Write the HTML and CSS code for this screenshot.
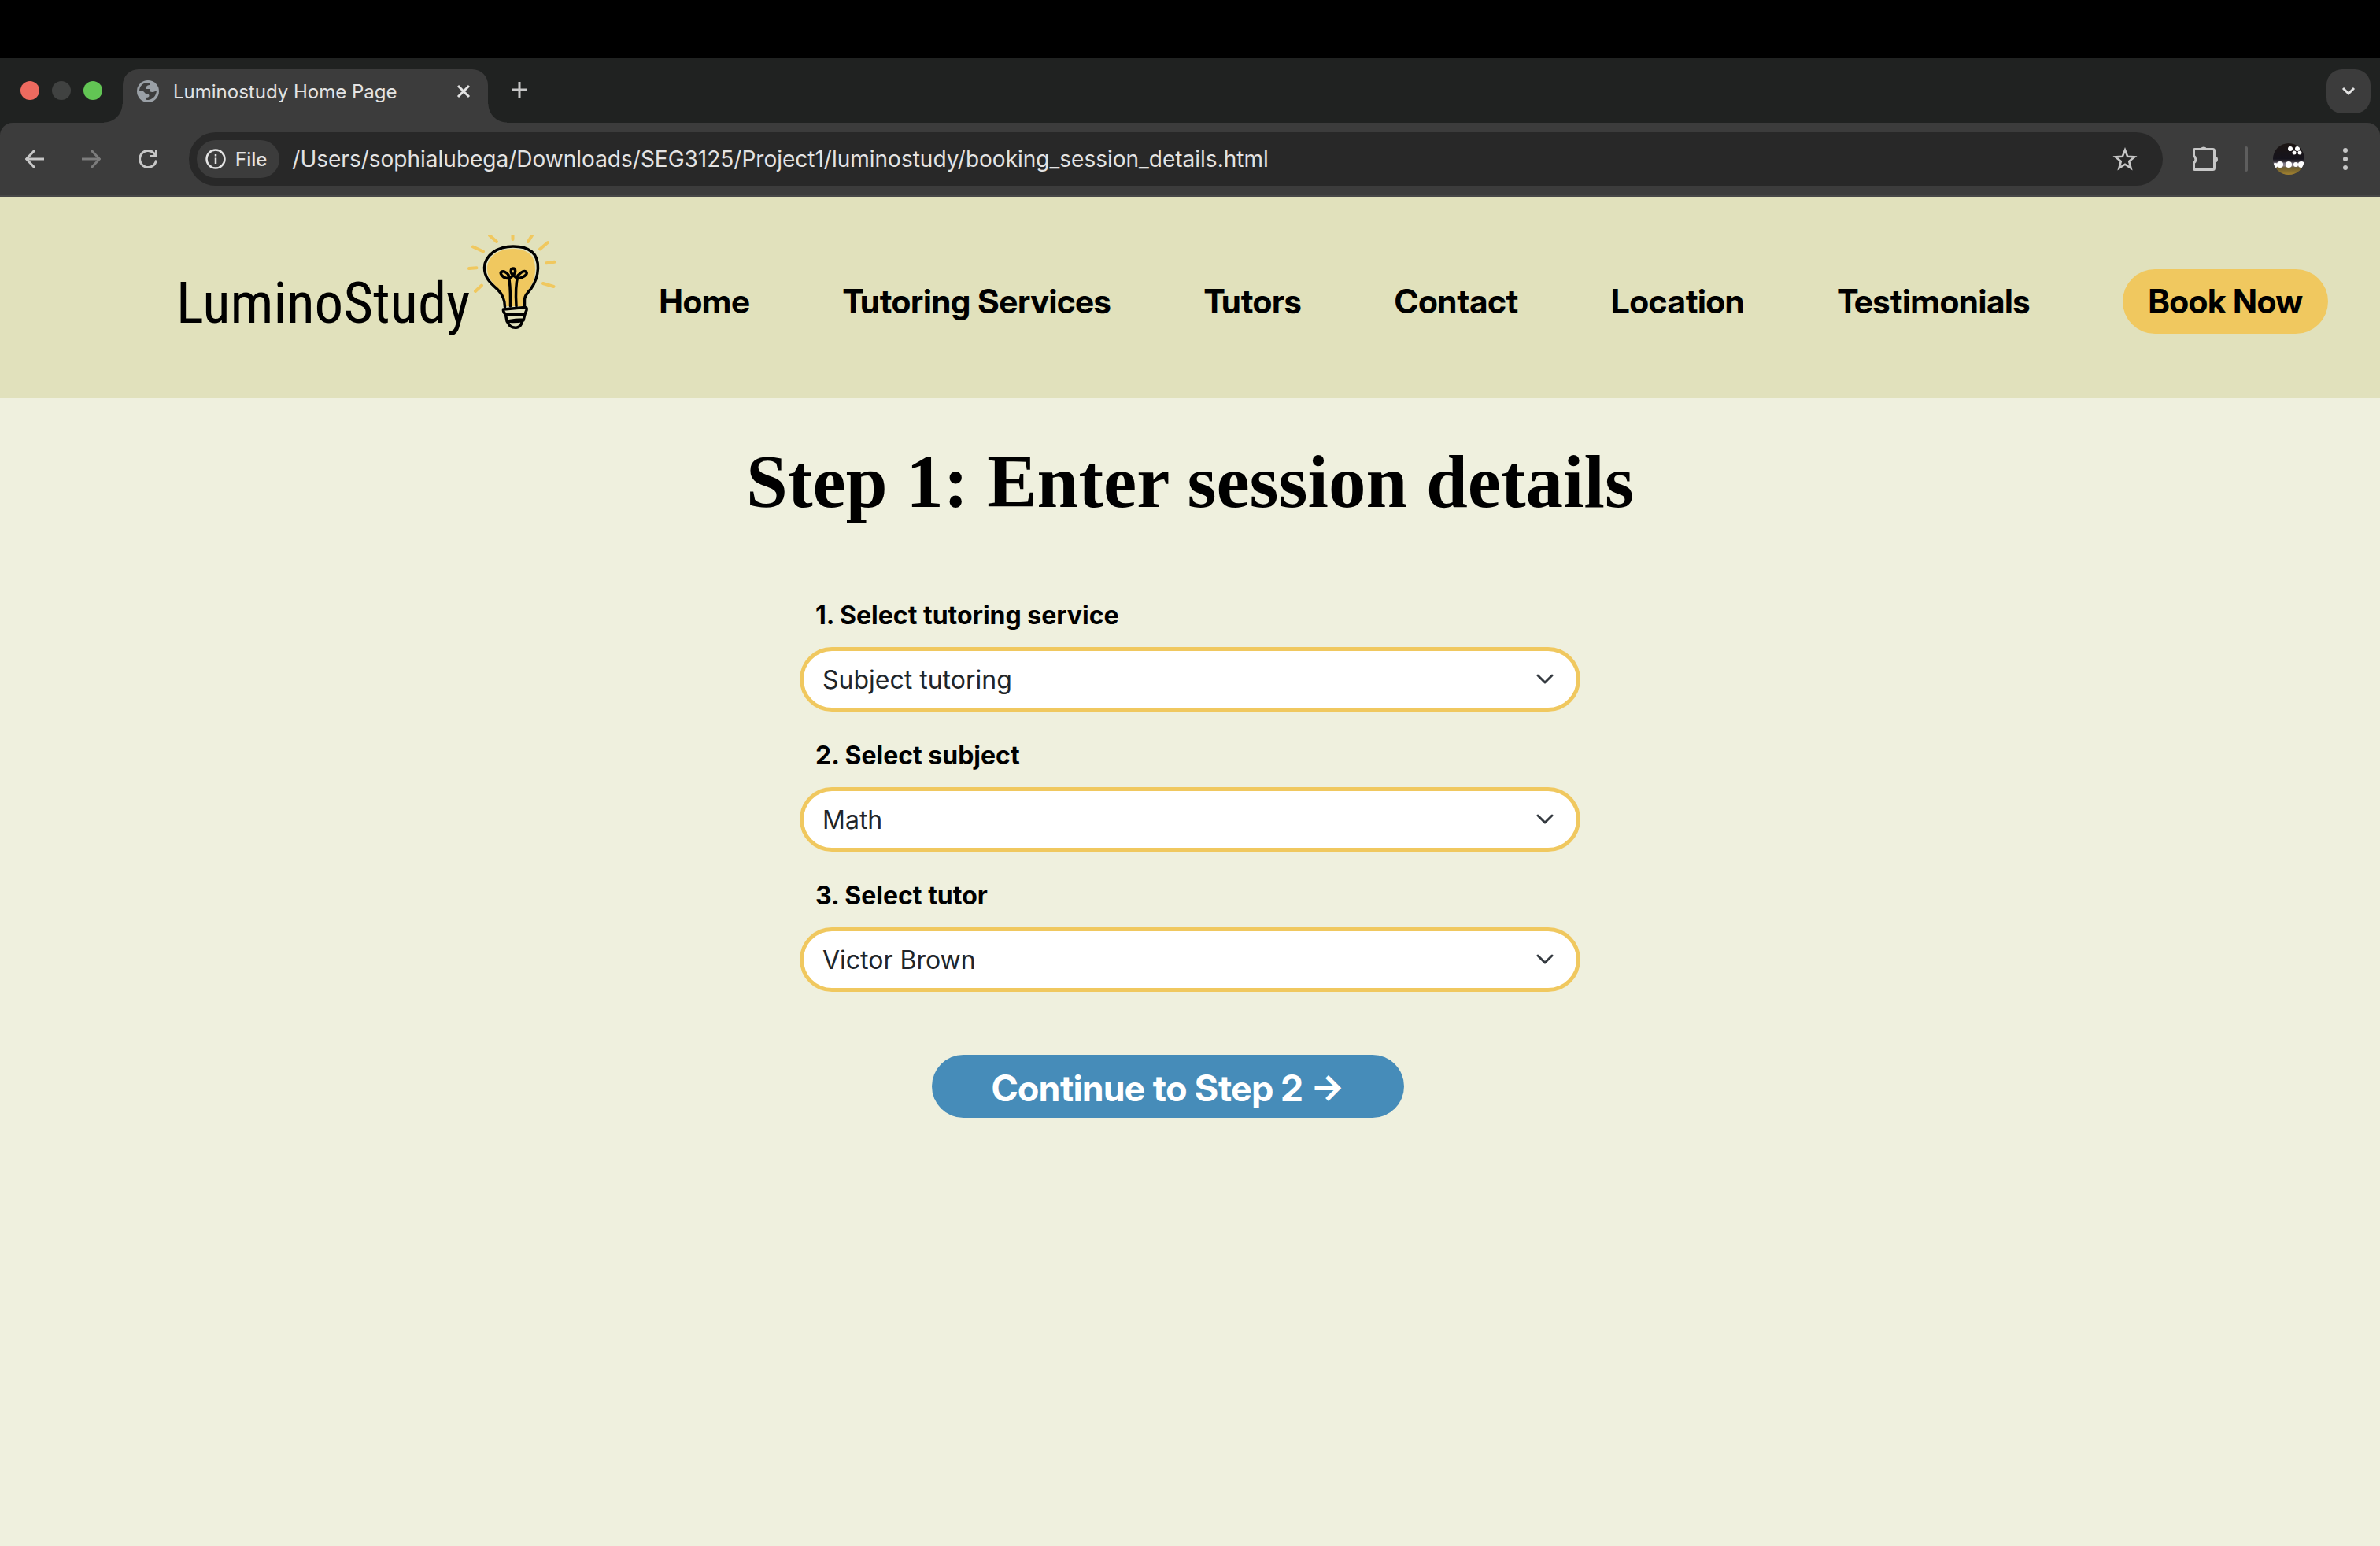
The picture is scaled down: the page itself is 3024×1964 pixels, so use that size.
FILE: index.html
```
<!DOCTYPE html>
<html lang="en">
<head>
<meta charset="utf-8">
<meta name="viewport" content="width=device-width, initial-scale=1">
<title>Luminostudy Home Page</title>
<link rel="stylesheet" href="styles.css">
</head>
<body>
<div class="screen-top"></div>
<div class="tabstrip">
  <div class="lights">
    <span class="light light-red"></span>
    <span class="light light-grey"></span>
    <span class="light light-green"></span>
  </div>
  <div class="tab">
    <svg class="globe" viewBox="0 0 28 28" aria-hidden="true">
      <circle cx="14" cy="14" r="14" fill="#9aa0a6"/>
      <path d="M3 14C3 8 7 3.500 13 3l3 .5V6c-2 0-4 1-4 2.500V11h4c0 3 1 4 3.500 4 2 0 3-1 5.500-2-.5 6-4 11-10.500 12-1.500 0-2 0-3-.5V22c3 0 4-1 4-2.500S14 17 12 17s-2-2-4-3z" fill="#3c3c3c"/>
    </svg>
    <span class="tab-title">Luminostudy Home Page</span>
    <button class="icon-btn tab-close" aria-label="Close tab"><svg width="18" height="18" viewBox="0 0 18 18"><path d="M2 2l14 14M16 2L2 16" stroke="#e3e3e3" stroke-width="3" fill="none"/></svg></button>
  </div>
  <button class="icon-btn new-tab" aria-label="New tab"><svg width="20" height="20" viewBox="0 0 20 20"><path d="M10 0v20M0 10h20" stroke="#c7c7c7" stroke-width="3"/></svg></button>
  <button class="tab-search" aria-label="Search tabs"><svg width="18" height="12" viewBox="0 0 18 12"><path d="M2 2l7 7 7-7" stroke="#e3e3e3" stroke-width="3" fill="none"/></svg></button>
</div>
<div class="toolbar-back">
  <div class="toolbar">
    <div class="nav-buttons">
      <button class="icon-btn" aria-label="Back"><svg width="24" height="24" viewBox="0 0 24 24"><path d="M24 12H2M12 1L1.500 12 12 23" stroke="#c7c7c7" stroke-width="3" fill="none"/></svg></button>
      <button class="icon-btn" aria-label="Forward"><svg width="24" height="24" viewBox="0 0 24 24"><path d="M0 12h22M12 1l10.500 11L12 23" stroke="#7c7c7c" stroke-width="3" fill="none"/></svg></button>
      <button class="icon-btn" aria-label="Reload"><svg width="24" height="24" viewBox="0 0 24 24"><path d="M22.500 13.500A10.500 10.500 0 1 1 19.500 4.500L22 8" stroke="#c7c7c7" stroke-width="3" fill="none"/><path d="M22.500 0v8.500H14" stroke="#c7c7c7" stroke-width="3" fill="none"/></svg></button>
    </div>
    <div class="omnibox">
      <button class="file-chip"><svg width="26" height="26" viewBox="0 0 26 26"><circle cx="13" cy="13" r="11.500" stroke="#e3e3e3" stroke-width="2.500" fill="none"/><path d="M13 11.500V19M13 7v2.500" stroke="#e3e3e3" stroke-width="2.500"/></svg>File</button>
      <input class="address" type="text" aria-label="Address" value="/Users/sophialubega/Downloads/SEG3125/Project1/luminostudy/booking_session_details.html">
      <button class="icon-btn" aria-label="Bookmark"><svg width="32" height="32" viewBox="0 0 32 32"><path d="M16 4.500l3.200 8.300 8.900.5-6.900 5.600 2.300 8.700-7.500-4.900-7.500 4.900 2.300-8.700-6.900-5.600 8.900-.5z" stroke="#c7c7c7" stroke-width="2.600" fill="none"/></svg></button>
    </div>
    <div class="tools">
      <button class="icon-btn" aria-label="Extensions"><svg width="36" height="36" viewBox="0 0 36 36"><path d="M4.500 5.500h23q2 0 2 2v22q0 2-2 2h-23q-1 0-1-2v-6.500a5.500 5.500 0 0 0 0-9V7.500q0-2 1-2z" stroke="#c7c7c7" stroke-width="3" fill="none"/><path d="M12 5a4.500 4.500 0 0 1 8 0zM30 14.500a4 4 0 0 1 0 8z" fill="#c7c7c7"/></svg></button>
      <span class="divider"></span>
      <button class="icon-btn" aria-label="Profile"><svg width="40" height="40" viewBox="0 0 40 40">
        <defs><clipPath id="face"><circle cx="20" cy="20" r="20"/></clipPath>
        <linearGradient id="stage" x1="0" y1="0" x2="0" y2="1"><stop offset="0" stop-color="#1c1512"/><stop offset=".5" stop-color="#15131c"/><stop offset=".68" stop-color="#6d6468"/><stop offset=".8" stop-color="#71602e"/><stop offset="1" stop-color="#a3822f"/></linearGradient></defs>
        <g clip-path="url(#face)"><rect width="40" height="40" fill="url(#stage)"/>
        <path d="M0 27h40" stroke="#b9b5cf" stroke-width="5" opacity=".4"/>
        <g fill="#fff"><circle cx="22" cy="7" r="3"/><circle cx="31" cy="7" r="3"/><circle cx="27" cy="12" r="2.500"/><circle cx="34" cy="12" r="2.500"/><circle cx="3" cy="28" r="3"/><circle cx="9" cy="27" r="4"/><circle cx="20" cy="27" r="4"/><circle cx="29" cy="27" r="3"/><circle cx="36" cy="27" r="4"/></g></g></svg></button>
      <button class="icon-btn" aria-label="Menu"><svg width="8" height="32" viewBox="0 0 8 32"><g fill="#c7c7c7"><circle cx="4" cy="5" r="3"/><circle cx="4" cy="16" r="3"/><circle cx="4" cy="27" r="3"/></g></svg></button>
    </div>
  </div>
</div>
<header class="site-header">
  <a class="logo" href="#">
    <span class="logo-text">LuminoStudy</span>
    <svg class="bulb" width="112" height="122" viewBox="0 0 112 122" aria-hidden="true">
      <g stroke="#f0c85f" stroke-width="4" stroke-linecap="round" fill="none">
        <path d="M28 0l9 8M57.500 0v5M82 0l-5 8M102 9l-10 8.500M100 35.300l10.500-1.600M96 61l13.500 4M7 14.500l13 6M2 42l9.500-.7M18 63.500l-8 7.500"/>
      </g>
      <path d="M57 17C39 17 25 28 25 42c0 13 8 18 14 26 7 8 10 13 10 22h21c-1-9 3-15 8-22 5-7 8-15 8-25 0-18-10-26-29-26z" fill="#f0c85f"/>
      <g stroke="#000" stroke-width="3.500" stroke-linecap="round" stroke-linejoin="round" fill="none">
        <path d="M47.500 91c0-10-3-16-9-22S21.500 56 21.500 41C22 25 38 14 58 14c21 0 32 9 31.500 28-.5 12-4 19-9 26-5 6-8 9-8 14v8"/>
        <path d="M54.500 90c0-15 .5-27-2.500-39M62 90c-1-15-1-27 2-39"/>
        <path d="M58 50c-4-2-3.500-8 0-8s3.500 6 0 8c-2 4-8 6-12 3s-5-6-2-7 8 3 8 5M58 50c3 4 7 6 12 3 4-2 7-5 4-7s-9 3-10 6"/>
        <path d="M46 94l27-2.500q3 0 2 3.500l-2 5q-12 1-25 0-3-3-2.500-6zM48.500 101l1.500 8c8 1 14 .5 21-1l2-8M50 109l4 6q4 3 9 2t7-9M51 109q10-2 20-2"/>
      </g>
    </svg>
  </a>
  <nav class="site-nav">
    <a href="#">Home</a>
    <a href="#">Tutoring Services</a>
    <a href="#">Tutors</a>
    <a href="#">Contact</a>
    <a href="#">Location</a>
    <a href="#">Testimonials</a>
    <a class="book" href="#">Book Now</a>
  </nav>
</header>
<main class="content">
  <h1>Step 1: Enter session details</h1>
  <form class="details">
    <div class="field">
      <label for="service">1. Select tutoring service</label>
      <div class="select-wrap">
        <select id="service"><option>Subject tutoring</option></select>
        <svg class="chevron" viewBox="0 0 22 14" aria-hidden="true"><path d="M2 2l9 9 9-9" stroke="#343a40" stroke-width="3" stroke-linecap="round" stroke-linejoin="round" fill="none"/></svg>
      </div>
    </div>
    <div class="field">
      <label for="subject">2. Select subject</label>
      <div class="select-wrap">
        <select id="subject"><option>Math</option></select>
        <svg class="chevron" viewBox="0 0 22 14" aria-hidden="true"><path d="M2 2l9 9 9-9" stroke="#343a40" stroke-width="3" stroke-linecap="round" stroke-linejoin="round" fill="none"/></svg>
      </div>
    </div>
    <div class="field">
      <label for="tutor">3. Select tutor</label>
      <div class="select-wrap">
        <select id="tutor"><option>Victor Brown</option></select>
        <svg class="chevron" viewBox="0 0 22 14" aria-hidden="true"><path d="M2 2l9 9 9-9" stroke="#343a40" stroke-width="3" stroke-linecap="round" stroke-linejoin="round" fill="none"/></svg>
      </div>
    </div>
    <div class="actions"><button class="continue" type="button">Continue to Step 2 →</button></div>
  </form>
</main>
</body>
</html>
```
FILE: styles.css
```
* { box-sizing: border-box; }
body {
  margin: 0;
  background: #eff0de;
  color: #000;
  font-family: Inter, "Liberation Sans", sans-serif;
}
button { border: 0; font: inherit; cursor: pointer; }
svg { display: block; flex: none; }

/* Browser window */
.screen-top { height: 74px; background: #000; }
.tabstrip {
  display: flex;
  height: 82px;
  padding: 14px 12px 0 26px;
  background: #202221;
}
.lights { display: flex; gap: 16px; width: 130px; padding-top: 15px; }
.light { width: 24px; height: 24px; border-radius: 50%; }
.light-red { background: #ed6a5f; }
.light-grey { background: #404241; }
.light-green { background: #62c554; }
.tab {
  position: relative;
  display: flex;
  align-items: center;
  width: 464px;
  height: 68px;
  padding: 0 22px 12px 18px;
  background: #3c3c3c;
  border-radius: 20px 20px 0 0;
  color: #e3e3e3;
  font-size: 24px;
}
.tab::before,
.tab::after {
  content: "";
  position: absolute;
  bottom: 0;
  width: 24px;
  height: 24px;
}
.tab::before { left: -24px; background: radial-gradient(circle at 0 0, transparent 23px, #3c3c3c 24px); }
.tab::after { right: -24px; background: radial-gradient(circle at 100% 0, transparent 23px, #3c3c3c 24px); }
.globe { width: 28px; height: 28px; }
.tab-title { flex: 1; margin-left: 18px; }
.icon-btn { padding: 0; background: none; }
.new-tab { height: 52px; margin-left: 30px; }
.tab-search {
  display: grid;
  place-items: center;
  width: 56px;
  height: 56px;
  margin-left: auto;
  padding: 0;
  border-radius: 20px;
  background: #3c3c3c;
}
.toolbar-back { background: #202221; }
.toolbar {
  display: flex;
  align-items: center;
  height: 94px;
  padding: 0 40px 0 32px;
  border-bottom: 2px solid #474747;
  border-radius: 16px 16px 0 0;
  background: #3c3c3c;
}
.nav-buttons { display: flex; gap: 48px; }
.omnibox {
  display: flex;
  flex: 1;
  align-items: center;
  height: 68px;
  margin: 0 36px 0 40px;
  padding: 0 32px 0 10px;
  border-radius: 34px;
  background: #282828;
}
.file-chip {
  display: flex;
  align-items: center;
  gap: 12px;
  height: 48px;
  padding: 0 16px 0 11px;
  border-radius: 24px;
  background: #3c3c3c;
  color: #e3e3e3;
  font-size: 24px;
  font-weight: 500;
}
.address {
  flex: 1;
  min-width: 0;
  margin-left: 16px;
  padding: 0;
  border: 0;
  background: none;
  color: #e3e3e3;
  font: inherit;
  font-size: 28px;
}
.tools { display: flex; align-items: center; }
.divider { width: 4px; height: 32px; margin: 0 32px; border-radius: 2px; background: #5e5e5e; }
.tools .icon-btn:last-child { margin-left: 48px; }

/* Site header */
.site-header {
  display: flex;
  align-items: center;
  justify-content: space-between;
  height: 256px;
  padding: 10px 66px 0 224px;
  background: #e1e1bc;
}
.logo {
  display: flex;
  align-items: flex-end;
  color: #000;
  text-decoration: none;
  padding-bottom: 46px;
}
.logo-text {
  width: 370px;
  font-family: "Roboto Condensed", "Open Sans Condensed", Lato, sans-serif;
  font-size: 73px;
  line-height: 72px;
}
.site-nav { display: flex; align-items: center; gap: 118px; }
.site-nav a {
  color: #000;
  font-family: "Inter Display", Inter, sans-serif;
  font-size: 42px;
  font-weight: 700;
  line-height: 48px;
  text-decoration: none;
  white-space: nowrap;
}
.site-nav .book {
  padding: 17px 32px;
  border-radius: 41px;
  background: #f0c85f;
}

/* Booking form */
.content { padding: 56px 32px; }
h1 {
  margin: 0;
  font-family: "Liberation Serif", serif;
  font-size: 95px;
  font-weight: 700;
  line-height: 100px;
  text-align: center;
}
.details {
  display: flex;
  flex-direction: column;
  gap: 32px;
  max-width: 992px;
  margin: 96px auto 0;
}
.field label {
  display: block;
  padding: 0 20px;
  font-size: 32px;
  font-weight: 700;
  line-height: 48px;
}
.select-wrap { position: relative; margin-top: 16px; }
.select-wrap select {
  display: block;
  width: 100%;
  height: 82px;
  padding: 0 72px 0 24px;
  appearance: none;
  border: 5px solid #f0c85f;
  border-radius: 41px;
  background: #fff;
  color: #212529;
  font: inherit;
  font-size: 32px;
}
.chevron {
  position: absolute;
  top: 34px;
  right: 34px;
  width: 22px;
  height: 14px;
  pointer-events: none;
}
.actions { display: flex; justify-content: center; margin-top: 48px; padding-right: 56px; }
.continue {
  width: 600px;
  height: 80px;
  padding: 4px 0 0;
  border-radius: 40px;
  background: #468cb9;
  color: #fff;
  font-family: "Inter Display", Inter, sans-serif;
  font-size: 46px;
  font-weight: 700;
}
```
